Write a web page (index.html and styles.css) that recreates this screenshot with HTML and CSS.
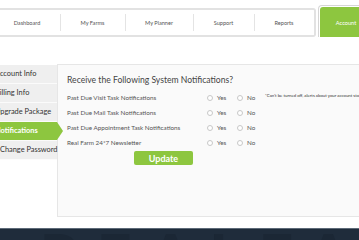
FILE: index.html
```html
<!DOCTYPE html>
<html lang="en">
<head>
  <meta charset="UTF-8" />
  <meta name="viewport" content="width=device-width, initial-scale=1.0" />
  <title>Account - Notifications</title>
  <link rel="stylesheet" href="styles.css">
</head>
<body>
  <header class="topbar">
    <nav class="tabs">
      <a class="tab" href="#">Dashboard</a>
      <a class="tab" href="#">My Farms</a>
      <a class="tab" href="#">My Planner</a>
      <a class="tab" href="#">Support</a>
      <a class="tab" href="#">Reports</a>
    </nav>
    <a class="tab-active" href="#"><span>Account</span></a>
  </header>

  <main class="account">
    <ul class="side-menu">
      <li>Account Info</li>
      <li>Billing Info</li>
      <li>Upgrade Package</li>
      <li class="current">Notifications</li>
      <li class="indent">Change Password</li>
    </ul>

    <section class="panel">
      <h2>Receive the Following System Notifications?</h2>
      <form class="notif-form">
        <div class="notif-grid">
          <span class="label">Past Due Visit Task Notifications</span>
          <label class="opt"><input type="radio" name="visit"> Yes</label>
          <label class="opt"><input type="radio" name="visit"> No</label>
          <span class="note">*Can't be turned off, alerts about your account status</span>

          <span class="label">Past Due Mail Task Notifications</span>
          <label class="opt"><input type="radio" name="mail"> Yes</label>
          <label class="opt"><input type="radio" name="mail"> No</label>
          <span></span>

          <span class="label">Past Due Appointment Task Notifications</span>
          <label class="opt"><input type="radio" name="appt"> Yes</label>
          <label class="opt"><input type="radio" name="appt"> No</label>
          <span></span>

          <span class="label">Real Farm 24*7 Newsletter</span>
          <label class="opt"><input type="radio" name="news"> Yes</label>
          <label class="opt"><input type="radio" name="news"> No</label>
          <span></span>
        </div>
        <button type="button" class="update-btn">Update</button>
      </form>
    </section>
  </main>

  <footer class="footer"><span class="mark">REALFARM</span></footer>
</body>
</html>
```

FILE: styles.css
```css
body {
  margin: 0;
  padding: 0;
  font-family: Lato, "Open Sans", sans-serif;
  background: #fff;
  color: #444;
  overflow: hidden;
  width: 359px;
  height: 240px;
}

.topbar {
  display: flex;
  align-items: flex-end;
  height: 37px;
  margin-left: -6px;
}

.tabs {
  display: flex;
  flex-shrink: 0;
  height: 25px;
  border: 2px solid #e2e2e2;
  border-left: none;
  border-radius: 0 3px 3px 0;
  background: #fff;
}

.tab {
  display: flex;
  align-items: center;
  justify-content: center;
  flex-shrink: 0;
  width: 65px;
  font-size: 5.6px;
  color: #555;
  text-decoration: none;
  position: relative;
}

.tab + .tab::before {
  content: "";
  position: absolute;
  left: 0;
  top: 4px;
  bottom: 4px;
  border-left: 1px solid #e4e4e4;
}

.tab:nth-child(1) { width: 66px; }
.tab:nth-child(3) { width: 68px; }
.tab:nth-child(4) { width: 61px; }
.tab:nth-child(5) { width: 60px; }

.tab-active {
  display: block;
  flex-shrink: 0;
  margin-left: 2px;
  height: 32px;
  width: 60px;
  border: 1px solid #d6d6d6;
  border-bottom: none;
  border-radius: 4px 4px 0 0;
  padding: 1px 1px 0;
  box-sizing: border-box;
  text-decoration: none;
}

.tab-active span {
  display: flex;
  align-items: center;
  justify-content: center;
  height: 100%;
  background: #8dc63f;
  border-radius: 3px 3px 0 0;
  color: #fff;
  font-size: 5.6px;
  padding-right: 4px;
}

.account {
  display: flex;
  margin-top: 27px;
}

.side-menu {
  list-style: none;
  flex-shrink: 0;
  margin: 1px 0 0 -5px;
  padding: 0;
  width: 62px;
  position: relative;
  z-index: 2;
}

.side-menu li {
  height: 18px;
  line-height: 18px;
  background: #efefef;
  border-bottom: 1px solid #fbfbfb;
  font-size: 7.4px;
  color: #333;
  white-space: nowrap;
}

.side-menu li.indent {
  padding-left: 5px;
}

.side-menu li.current {
  background: #8dc63f;
  color: #fff;
  font-weight: bold;
  position: relative;
}

.side-menu li.current::after {
  content: "";
  position: absolute;
  right: -6px;
  top: 0;
  border-top: 9.5px solid transparent;
  border-bottom: 9.5px solid transparent;
  border-left: 6px solid #8dc63f;
}

.panel {
  flex: 1;
  min-width: 310px;
  height: 153px;
  background: #fafafa;
  border: 1px solid #e6e6e6;
  border-right: none;
  padding: 9px 0 0 9px;
  box-sizing: border-box;
}

.panel h2 {
  margin: 0 0 4px;
  font-size: 8.6px;
  font-weight: normal;
  color: #444;
  line-height: 12px;
}

.notif-grid {
  display: grid;
  grid-template-columns: 140px 30px 28px auto;
  grid-auto-rows: 15px;
  align-items: center;
  font-size: 6.3px;
  color: #555;
}

.label {
  white-space: nowrap;
}

.opt {
  display: flex;
  align-items: center;
  gap: 4px;
}

.opt input {
  appearance: none;
  margin: 0;
  width: 6px;
  height: 6px;
  border: 1px solid #c8c8c8;
  border-radius: 50%;
  background: #fff;
  box-sizing: border-box;
}

.note {
  font-size: 4.3px;
  color: #333;
  white-space: nowrap;
  align-self: start;
  margin-top: 3px;
}

.update-btn {
  display: block;
  margin: 1px 0 0 67px;
  width: 59px;
  height: 14px;
  padding: 0;
  border: none;
  border-radius: 2px;
  background: #8dc63f;
  color: #fff;
  font-family: Lato, sans-serif;
  font-weight: bold;
  font-size: 9px;
}

.footer {
  margin-top: 11px;
  height: 20px;
  background: #1f2c3b;
  border-top: 1px solid #5d6a78;
  overflow: hidden;
  position: relative;
}

.mark {
  position: absolute;
  left: 40px;
  top: -4px;
  font-size: 60px;
  font-weight: 900;
  letter-spacing: 18px;
  color: #1b2735;
  line-height: 1;
}
```
